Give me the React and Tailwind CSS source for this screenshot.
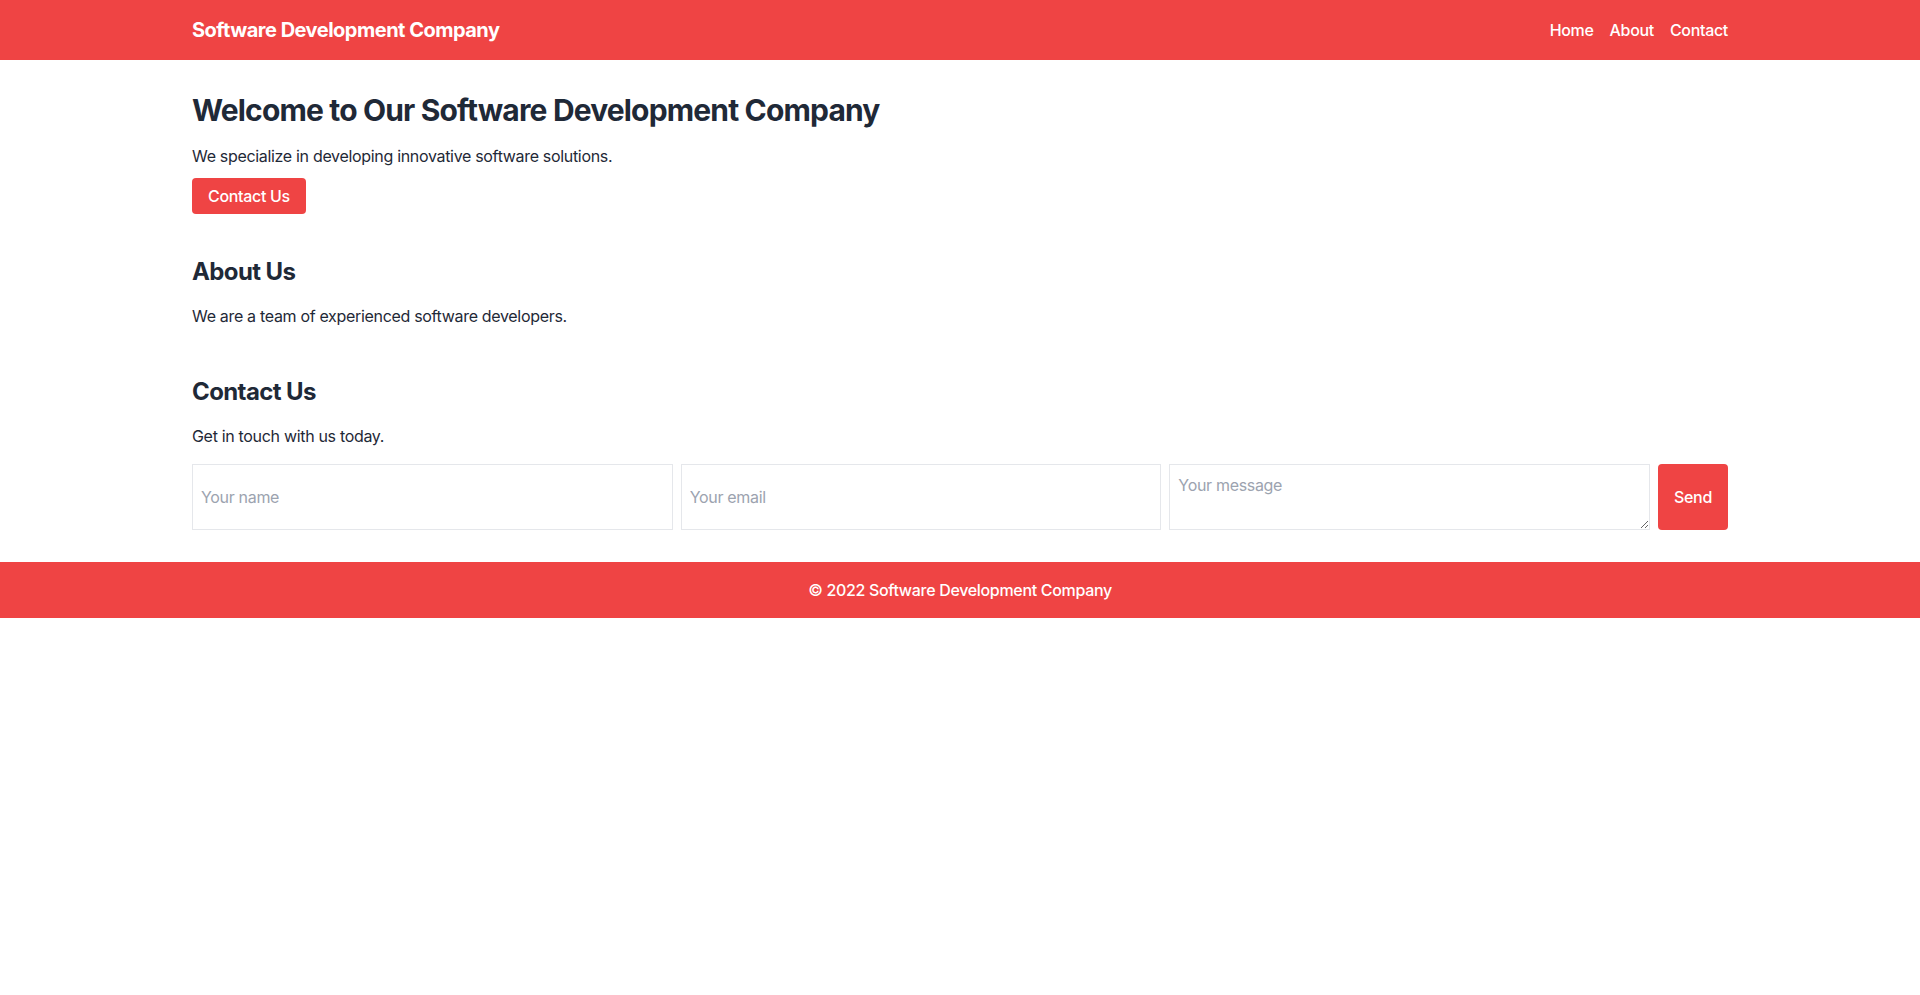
import React from 'react';

const App = () => {
  return (
    <div className="min-h-screen bg-white font-['Inter',sans-serif] tracking-[-0.02em] text-[#1f2937]">
      {/* Header */}
      <header className="bg-[#ef4444] text-white">
        <div className="container mx-auto flex justify-between items-center h-[60px]">
          <h1 className="text-xl font-bold tracking-[-0.025em]">Software Development Company</h1>
          <nav className="flex space-x-4 font-medium">
            <a href="#" className="text-white">Home</a>
            <a href="#" className="text-white">About</a>
            <a href="#" className="text-white">Contact</a>
          </nav>
        </div>
      </header>

      <main className="container mx-auto py-8">
        {/* Hero */}
        <section className="mb-[42px]">
          <h1 className="text-3xl font-bold tracking-[-0.028em] mb-4">Welcome to Our Software Development Company</h1>
          <p className="mb-2.5">We specialize in developing innovative software solutions.</p>
          <button className="bg-[#ef4444] text-white px-4 py-1.5 rounded font-medium">Contact Us</button>
        </section>

        {/* About */}
        <section className="mb-12">
          <h2 className="text-2xl font-bold tracking-[-0.025em] mb-4">About Us</h2>
          <p>We are a team of experienced software developers.</p>
        </section>

        {/* Contact */}
        <section>
          <h2 className="text-2xl font-bold tracking-[-0.025em] mb-4">Contact Us</h2>
          <p className="mb-4">Get in touch with us today.</p>
          <form className="flex gap-2" onSubmit={(e) => e.preventDefault()}>
            <input type="text" placeholder="Your name" className="flex-1 border border-[#e5e7eb] p-2 placeholder-[#9ca3af] outline-none" />
            <input type="email" placeholder="Your email" className="flex-1 border border-[#e5e7eb] p-2 placeholder-[#9ca3af] outline-none" />
            <textarea rows={2} placeholder="Your message" className="flex-1 border border-[#e5e7eb] p-2 placeholder-[#9ca3af] outline-none"></textarea>
            <button type="submit" className="bg-[#ef4444] text-white px-4 rounded font-medium">Send</button>
          </form>
        </section>
      </main>

      {/* Footer */}
      <footer className="bg-[#ef4444] text-white py-4">
        <p className="text-center font-medium">© 2022 Software Development Company</p>
      </footer>
    </div>
  );
};

export default App;
